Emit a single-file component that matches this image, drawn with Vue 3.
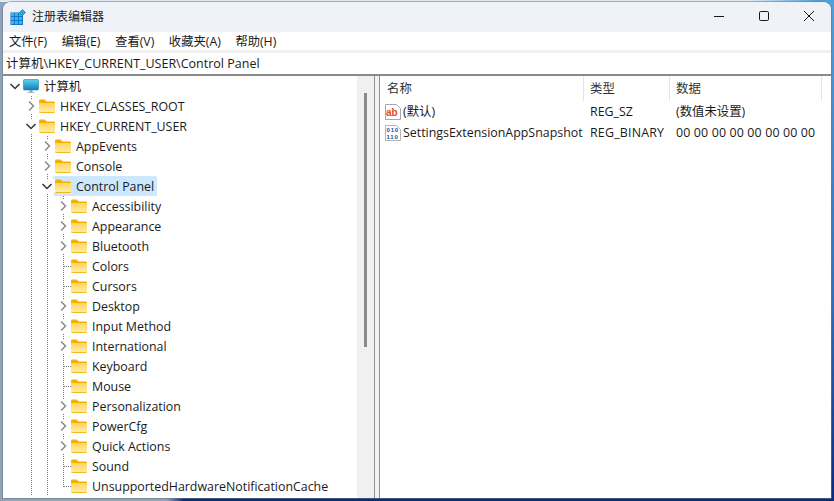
<script setup>
const rows = [
  { label: '计算机', level: 0, state: 'open', icon: 'pc' },
  { label: 'HKEY_CLASSES_ROOT', level: 1, state: 'closed' },
  { label: 'HKEY_CURRENT_USER', level: 1, state: 'open' },
  { label: 'AppEvents', level: 2, state: 'closed' },
  { label: 'Console', level: 2, state: 'closed' },
  { label: 'Control Panel', level: 2, state: 'open', selected: true },
  { label: 'Accessibility', level: 3, state: 'closed' },
  { label: 'Appearance', level: 3, state: 'closed' },
  { label: 'Bluetooth', level: 3, state: 'closed' },
  { label: 'Colors', level: 3, state: 'leaf' },
  { label: 'Cursors', level: 3, state: 'leaf' },
  { label: 'Desktop', level: 3, state: 'closed' },
  { label: 'Input Method', level: 3, state: 'closed' },
  { label: 'International', level: 3, state: 'closed' },
  { label: 'Keyboard', level: 3, state: 'leaf' },
  { label: 'Mouse', level: 3, state: 'leaf' },
  { label: 'Personalization', level: 3, state: 'closed' },
  { label: 'PowerCfg', level: 3, state: 'closed' },
  { label: 'Quick Actions', level: 3, state: 'closed' },
  { label: 'Sound', level: 3, state: 'leaf' },
  { label: 'UnsupportedHardwareNotificationCache', level: 3, state: 'last' },
]
const menus = ['文件(F)', '编辑(E)', '查看(V)', '收藏夹(A)', '帮助(H)']
</script>

<template>
  <div class="desk">
    <div class="win">
      <header class="title">
        <svg class="appicon" width="16" height="16" viewBox="0 0 16 16">
          <rect x="0.5" y="3.5" width="12.5" height="12.5" fill="#0f6cbd" />
          <g fill="#2cb8f3">
            <rect x="1" y="4" width="3.2" height="3.2" /><rect x="5" y="4" width="3.2" height="3.2" /><rect x="9" y="4" width="3.2" height="3.2" />
            <rect x="1" y="8" width="3.2" height="3.2" /><rect x="5" y="8" width="3.2" height="3.2" /><rect x="9" y="8" width="3.2" height="3.2" />
            <rect x="1" y="12" width="3.2" height="3.2" /><rect x="5" y="12" width="3.2" height="3.2" /><rect x="9" y="12" width="3.2" height="3.2" />
          </g>
          <path d="M12.5 0.5 L15.5 3.5 L12.5 6.5 L9.5 3.5 Z" fill="#3aa6e0" stroke="#1173bb" stroke-width="0.7" />
        </svg>
        <span class="title-text">注册表编辑器</span>
        <div class="controls">
          <svg width="10" height="10" viewBox="0 0 10 10"><path d="M0 5.5H10" stroke="#1a1a1a" fill="none" /></svg>
          <svg width="10" height="10" viewBox="0 0 10 10"><rect x=".5" y=".5" width="9" height="9" rx="1.2" stroke="#1a1a1a" fill="none" /></svg>
          <svg width="10" height="10" viewBox="0 0 10 10"><path d="M0 0L10 10M10 0L0 10" stroke="#1a1a1a" fill="none" /></svg>
        </div>
      </header>

      <nav class="menu">
        <span v-for="m in menus" :key="m">{{ m }}</span>
      </nav>

      <div class="address">计算机\HKEY_CURRENT_USER\Control Panel</div>

      <main class="panes">
        <section class="tree-pane">
          <div class="tree">
            <div v-for="r in rows" :key="r.label" class="row">
              <span v-for="i in r.level" :key="i" class="cell" :class="{ guide: i > 1 }"></span>
              <span class="cell" :class="{ guide: r.level > 0 && r.state !== 'last', 'half-guide': r.state === 'last', stub: r.state === 'leaf' || r.state === 'last' }">
                <svg v-if="r.state === 'closed'" class="chev" width="16" height="14" viewBox="0 0 16 14">
                  <path d="M6 2.5L10.5 7L6 11.5" fill="none" stroke="#8a8a8a" stroke-width="1.5" />
                </svg>
                <svg v-else-if="r.state === 'open'" class="chev" width="16" height="14" viewBox="0 0 16 14">
                  <path d="M3.5 5L8 9.5L12.5 5" fill="none" stroke="#333" stroke-width="1.5" />
                </svg>
              </span>
              <span class="item" :class="{ selected: r.selected }">
                <svg v-if="r.icon === 'pc'" width="16" height="16" viewBox="0 0 16 16">
                  <defs>
                    <linearGradient id="screen" x1="0" y1="0" x2="0" y2="1">
                      <stop offset="0" stop-color="#5fd0ea" />
                      <stop offset="1" stop-color="#0f7fc0" />
                    </linearGradient>
                  </defs>
                  <rect x="0.5" y="1.5" width="15" height="10.5" rx="1" fill="url(#screen)" stroke="#2b7fa8" stroke-width="0.6" />
                  <rect x="6.5" y="12" width="3" height="2" fill="#8fa3ad" />
                  <rect x="4.5" y="14" width="7" height="1" fill="#b0bcc4" />
                </svg>
                <svg v-else width="16" height="14" viewBox="0 0 16 14">
                  <defs>
                    <linearGradient id="fold" x1="0" y1="0" x2="0" y2="1">
                      <stop offset="0" stop-color="#ffd65c" />
                      <stop offset="1" stop-color="#ffedb0" />
                    </linearGradient>
                  </defs>
                  <path d="M0 2C0 1 .6 .5 1.4 .5H5.5L7.5 2.5H14.5C15.4 2.5 16 3 16 4V5H0Z" fill="#f5b000" />
                  <path d="M0 4H16V12.5C16 13.4 15.4 14 14.5 14H1.5C.6 14 0 13.4 0 12.5Z" fill="url(#fold)" />
                  <path d="M0 13H16V12.5C16 13.4 15.4 14 14.5 14H1.5C.6 14 0 13.4 0 12.5Z" fill="#f0b81e" />
                </svg>
                <span class="label">{{ r.label }}</span>
              </span>
            </div>
          </div>
          <div class="track"><div class="thumb"></div></div>
        </section>

        <div class="splitter"></div>

        <section class="list">
          <div class="list-head">
            <span class="col c1">名称</span>
            <span class="col c2">类型</span>
            <span class="col c3">数据</span>
            <span class="col c4"></span>
          </div>
          <div class="list-row">
            <span class="c1 namecell">
              <svg width="16" height="16" viewBox="0 0 16 16">
                <path d="M.5 .5H11.5L15.5 4.5V15.5H.5Z" fill="#fff" stroke="#a8a8a8" />
                <text x="1" y="11.5" class="ab">ab</text>
              </svg>
              <span class="up">(默认)</span>
            </span>
            <span class="c2">REG_SZ</span>
            <span class="c3 up">(数值未设置)</span>
          </div>
          <div class="list-row">
            <span class="c1 namecell">
              <svg width="16" height="16" viewBox="0 0 16 16">
                <path d="M.5 .5H11.5L15.5 4.5V15.5H.5Z" fill="#fff" stroke="#b4b4b4" />
                <text x="1.4" y="7" class="bin">010</text>
                <text x="1.4" y="14" class="bin">110</text>
              </svg>
              SettingsExtensionAppSnapshot
            </span>
            <span class="c2 wide">REG_BINARY</span>
            <span class="c3 wide2">00 00 00 00 00 00 00 00</span>
          </div>
        </section>
      </main>
    </div>
  </div>
</template>

<style>
html, body { margin: 0; padding: 0; }
</style>

<style scoped>
.desk {
  width: 834px;
  height: 501px;
  box-sizing: border-box;
  padding: 2px 3px 3px 3px;
  overflow: hidden;
  background:
    linear-gradient(to right, #dfeaf2 0, #dfeaf2 90%, rgba(223, 234, 242, 0) 98%) 0 0 / 100% 2px no-repeat,
    linear-gradient(to right, #8ea3b8 0, #8ea3b8 20%, rgba(20, 60, 150, 0) 22%),
    linear-gradient(to bottom, #4fa0dc 0, #2f6fc0 60%, #0a2a80 100%);
  font-family: "Open Sans", "Noto Sans CJK SC", sans-serif;
  font-size: 12px;
  color: #1a1a1a;
}
.win {
  height: 100%;
  display: flex;
  flex-direction: column;
  background: #fff;
  border-radius: 8px 8px 0 0;
  box-shadow: 0 0 0 1px rgba(110, 120, 130, .55);
  overflow: hidden;
}
.title {
  height: 30px;
  flex: none;
  display: flex;
  align-items: center;
  background: #eff3f8;
  padding-left: 7px;
}
.appicon { margin-top: -1px; }
.title-text {
  margin-left: 6px;
  margin-top: -3px;
  font-size: 12px;
  font-family: "Noto Sans CJK SC", sans-serif;
}
.controls {
  margin-left: auto;
  margin-right: 17px;
  margin-top: -2px;
  display: flex;
  gap: 35px;
}
.menu {
  height: 18px;
  flex: none;
  display: flex;
  align-items: center;
  gap: 14.6px;
  padding: 0 0 0 6px;
  box-sizing: border-box;
  background: #fff;
  font-size: 12.3px;
}
.address {
  height: 21px;
  flex: none;
  box-sizing: border-box;
  line-height: 22px;
  margin-top: 3px;
  padding-left: 3px;
  background: #fff;
  box-shadow: 0 -3px 0 #f0f0f0;
  font-size: 12.5px;
  white-space: nowrap;
}
.panes {
  flex: 1;
  min-height: 0;
  display: flex;
  border-top: 2px solid #8a8a8a;
}
.tree-pane {
  width: 371px;
  flex: none;
  display: flex;
}
.tree {
  flex: 1;
  min-width: 0;
  padding: 0 0 0 4px;
}
.row {
  height: 20px;
  display: flex;
  align-items: stretch;
}
.cell {
  width: 16px;
  flex: none;
  display: flex;
  align-items: center;
  justify-content: center;
  position: relative;
}
.guide {
  background: repeating-linear-gradient(to bottom, #777 0 1px, transparent 1px 2px) 8px 0 / 1px 100% no-repeat;
}
.half-guide {
  background: repeating-linear-gradient(to bottom, #777 0 1px, transparent 1px 2px) 8px 0 / 1px 11px no-repeat;
}
.stub::after {
  content: "";
  position: absolute;
  left: 9px;
  top: 10px;
  width: 7px;
  height: 1px;
  background: repeating-linear-gradient(to right, #777 0 1px, transparent 1px 2px);
}
.chev { background: #fff; }
.item {
  display: flex;
  align-items: center;
  height: 20px;
  padding: 0 3px 0 0;
}
.item.selected {
  background: #cce8ff;
  margin-left: -2px;
  padding-left: 2px;
  border-radius: 2px;
}
.label {
  margin-left: 5px;
  white-space: nowrap;
  font-size: 12.4px;
}
.track {
  width: 17px;
  flex: none;
  background: #f0f0f0;
}
.thumb {
  width: 3px;
  height: 254px;
  margin: 17px 0 0 7px;
  background: #8b8b8b;
}
.splitter {
  width: 6px;
  flex: none;
  box-sizing: border-box;
  background: #f2f2f6;
  border-left: 1px solid #8f8f8f;
  border-right: 1px solid #8f8f8f;
}
.list {
  flex: 1;
  min-width: 0;
  font-size: 12.4px;
}
.list-head {
  height: 25px;
  display: flex;
}
.col {
  box-sizing: border-box;
  border-right: 1px solid #e5e5e5;
  line-height: 25px;
  color: #333;
}
.c1 { width: 204px; padding-left: 7px; box-sizing: border-box; flex: none; white-space: nowrap; }
.c2 { width: 86px; padding-left: 6px; box-sizing: border-box; flex: none; white-space: nowrap; }
.c3 { width: 152px; padding-left: 6px; box-sizing: border-box; flex: none; white-space: nowrap; }
.c4 { width: 7px; flex: none; border-right: 0; }
.wide { letter-spacing: .2px; }
.wide2 { letter-spacing: .15px; }
.up { padding-bottom: 2px; }
.list-row {
  height: 21px;
  display: flex;
  align-items: center;
}
.namecell {
  display: flex;
  align-items: center;
  gap: 2px;
  padding-left: 5px;
}
.ab { font: 700 10px "Liberation Sans", sans-serif; fill: #e0491d; }
.bin { font: 700 6px "Liberation Sans", sans-serif; fill: #1a4fa8; letter-spacing: .9px; }
</style>
